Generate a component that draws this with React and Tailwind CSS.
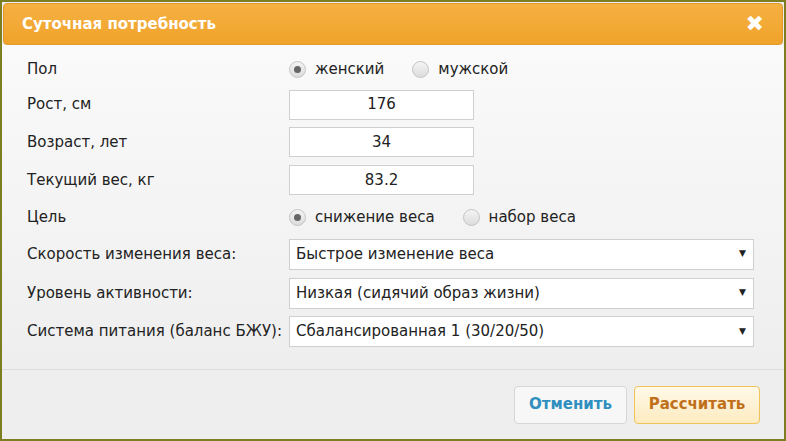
export default function App() {
  const f = { fontFamily: '"DejaVu Sans", Verdana, sans-serif' };
  const Radio = ({ on, label }) => (
    <label className="flex items-center gap-[9px]">
      <span className="w-[17px] h-[17px] rounded-full border border-[#c4c4c4] bg-gradient-to-b from-[#f4f4f4] to-[#dcdcdc] flex items-center justify-center">
        {on && <span className="w-[7px] h-[7px] rounded-full bg-[#666]" />}
      </span>
      <span>{label}</span>
    </label>
  );
  const Row = ({ label, children, h = "h-[37px]" }) => (
    <div className={"flex items-center " + h}>
      <div className="w-[262px] shrink-0">{label}</div>
      {children}
    </div>
  );
  const Input = ({ v }) => (
    <div className="w-[185px] h-[30px] border border-[#cfcfcf] bg-white flex items-center justify-center">{v}</div>
  );
  const Select = ({ v }) => (
    <div className="w-[465px] h-[31px] border border-[#cfcfcf] bg-white flex items-center justify-between pl-[6px] pr-[7px]">
      <span>{v}</span>
      <span className="text-[9px]">▼</span>
    </div>
  );
  return (
    <div style={f} className="w-[786px] h-[441px] bg-[#7d7d22] p-[2px] text-[15px] text-[#222]">
      <div className="w-full h-full bg-[#eeeeee] flex flex-col overflow-hidden">
        <div className="h-[42px] mx-[1px] mt-[1px] rounded-[4px] bg-gradient-to-b from-[#f5b041] to-[#f0a32a] border border-[#e09a2c] flex items-center justify-between px-[18px]">
          <span className="text-white font-bold text-[15px]">Суточная потребность</span>
          <span className="text-white font-black text-[22px] leading-none">✖</span>
        </div>
        <div className="flex-1 bg-gradient-to-b from-[#fafafa] to-[#eeeeee] px-[25px] pt-[7px] border-b border-[#dcdcdc]">
          <Row label="Пол" h="h-[34px]"><div className="flex gap-[28px]"><Radio on label="женский" /><Radio label="мужской" /></div></Row>
          <Row label="Рост, см"><Input v="176" /></Row>
          <Row label="Возраст, лет" h="h-[38px]"><Input v="34" /></Row>
          <Row label="Текущий вес, кг" h="h-[38px]"><Input v="83.2" /></Row>
          <Row label="Цель" h="h-[36px]"><div className="flex gap-[28px]"><Radio on label="снижение веса" /><Radio label="набор веса" /></div></Row>
          <Row label="Скорость изменения веса:" h="h-[38px]"><Select v="Быстрое изменение веса" /></Row>
          <Row label="Уровень активности:" h="h-[40px]"><Select v="Низкая (сидячий образ жизни)" /></Row>
          <Row label="Система питания (баланс БЖУ):"><Select v="Сбалансированная 1 (30/20/50)" /></Row>
        </div>
        <div className="h-[69px] flex items-center justify-end gap-[7px] pr-[24px]">
          <div className="w-[113px] h-[38px] rounded-[4px] border border-[#d6d6d6] bg-[#f7f7f7] flex items-center justify-center text-[#2f8fbf] font-bold">Отменить</div>
          <div className="w-[126px] h-[38px] rounded-[4px] border border-[#f0c45a] bg-gradient-to-b from-[#fff9e8] to-[#fdebc0] flex items-center justify-center text-[#c0701a] font-bold">Рассчитать</div>
        </div>
      </div>
    </div>
  );
}
